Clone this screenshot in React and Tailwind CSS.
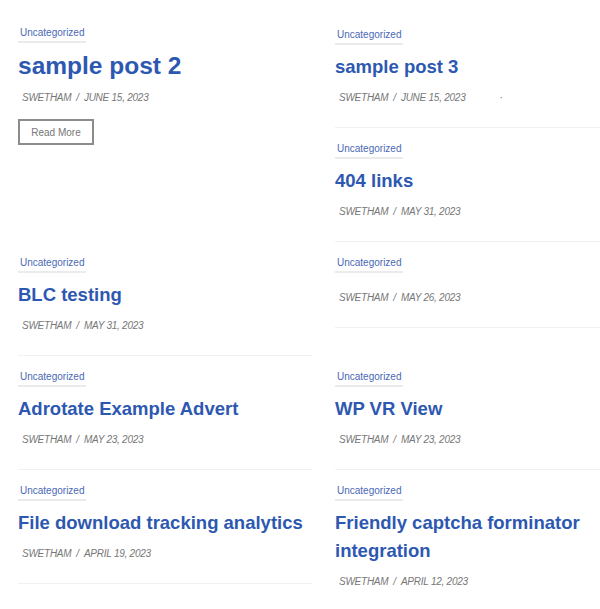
import React from "react";

const posts = [
  { title: "sample post 3", date: "JUNE 15, 2023", dot: true },
  { title: "404 links", date: "MAY 31, 2023" },
  { title: "BLC testing", date: "MAY 31, 2023" },
  { title: "", date: "MAY 26, 2023" },
  { title: "Adrotate Example Advert", date: "MAY 23, 2023" },
  { title: "WP VR View", date: "MAY 23, 2023" },
  { title: "File download tracking analytics", date: "APRIL 19, 2023" },
  { title: "Friendly captcha forminator integration", date: "APRIL 12, 2023" },
];

const Category = () => (
  <div className="flex">
    <a
      href="#"
      className="block px-[2px] pb-[2px] text-[10px] leading-[12px] text-[#4a69b5] border-b-2 border-[#ebebeb]"
    >
      Uncategorized
    </a>
  </div>
);

const Meta = ({ date, dot }) => (
  <div className="pl-[4px] text-[10px] leading-[14px] tracking-[-0.25px] italic text-[#777777]">
    SWETHAM<span className="mx-[5px]">/</span>
    {date}
    {dot && <span className="ml-[34px]">·</span>}
  </div>
);

const PostCard = ({ post }) => (
  <article className="flex flex-col self-start pt-[15px] pb-[22px] border-b border-[#f0f0f0]">
    <Category />
    <h2 className="mt-[8px] text-[18.5px] leading-[28px] font-bold text-[#2d58b1]">
      {post.title}
    </h2>
    <div className="mt-[10px]">
      <Meta date={post.date} dot={post.dot} />
    </div>
  </article>
);

const FeaturedPost = () => (
  <article className="row-span-2 flex flex-col self-start pt-[13px]">
    <Category />
    <h2 className="mt-[7px] text-[24.5px] leading-[32px] font-bold text-[#2d58b1]">
      sample post 2
    </h2>
    <div className="mt-[9px]">
      <Meta date="JUNE 15, 2023" />
    </div>
    <button className="mt-[14px] flex h-[26px] w-[76px] items-center justify-center border-2 border-[#8c8c8c] text-[10px] text-[#777777]">
      Read More
    </button>
  </article>
);

const App = () => {
  return (
    <div
      className="h-[609px] w-[600px] overflow-hidden bg-white"
      style={{ fontFamily: '"Liberation Sans", Arial, sans-serif' }}
    >
      <div className="grid grid-cols-[294px_294px] gap-x-[23px] pl-[18px] pt-[14px]">
        <FeaturedPost />
        {posts.map((post, i) => (
          <PostCard key={i} post={post} />
        ))}
      </div>
    </div>
  );
};

export default App;
